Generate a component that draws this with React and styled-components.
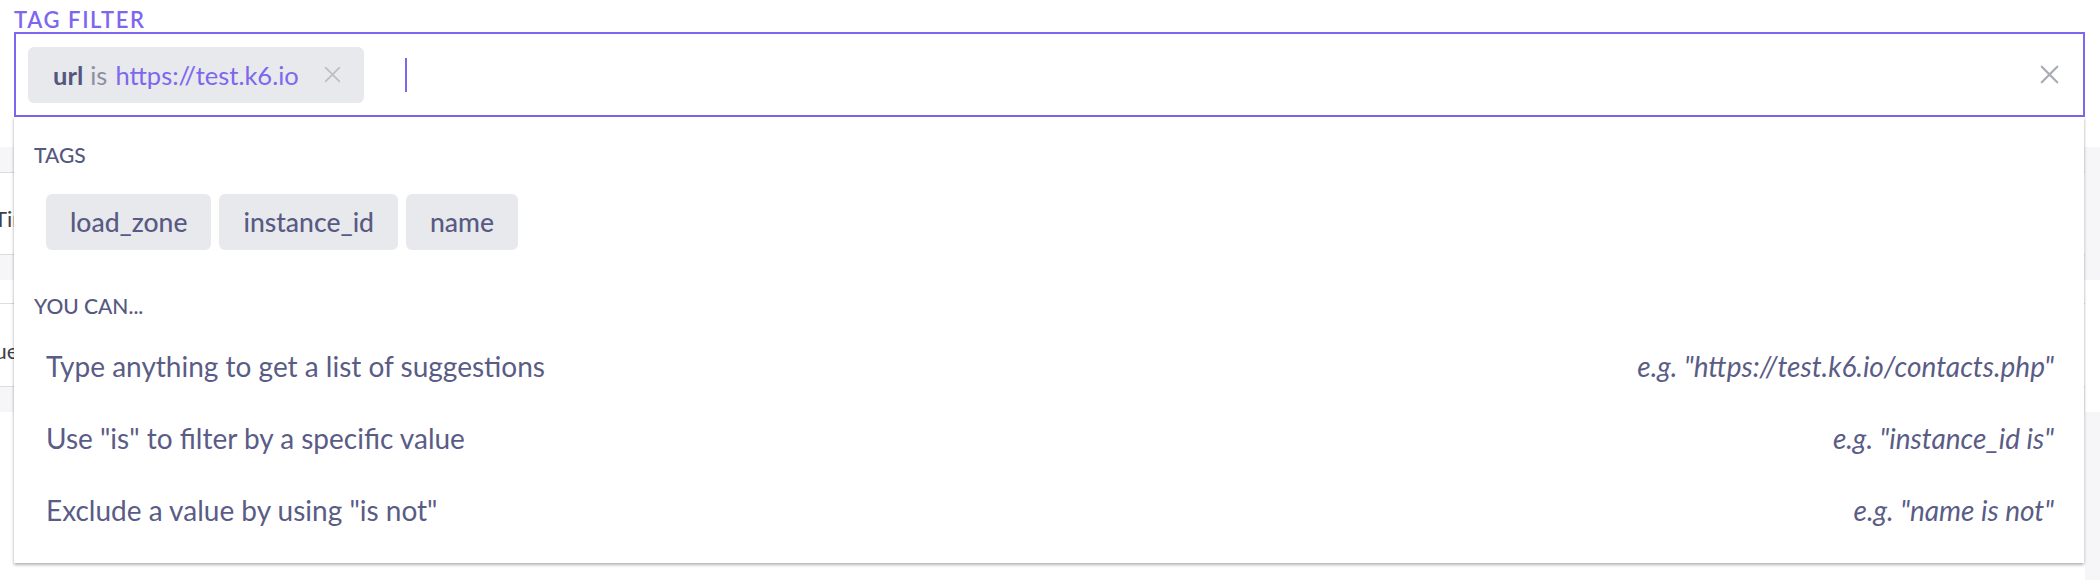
import styled, { createGlobalStyle } from 'styled-components';

const GlobalStyle = createGlobalStyle`
  html,
  body {
    margin: 0;
    padding: 0;
    background: #fff;
    overflow: hidden;
  }
  body {
    font-family: Lato, 'Open Sans', sans-serif;
  }
`;

const tags = ['load_zone', 'instance_id', 'name'];

const tips = [
  {
    text: 'Type anything to get a list of suggestions',
    example: 'e.g. "https://test.k6.io/contacts.php"',
  },
  { text: 'Use "is" to filter by a specific value', example: 'e.g. "instance_id is"' },
  { text: 'Exclude a value by using "is not"', example: 'e.g. "name is not"' },
];

function CloseIcon({ size, color, stroke }) {
  return (
    <svg width={size} height={size} viewBox="0 0 16 16" fill="none">
      <path
        d="M1.5 1.5L14.5 14.5M14.5 1.5L1.5 14.5"
        stroke={color}
        strokeWidth={stroke}
        strokeLinecap="round"
      />
    </svg>
  );
}

function TagFilter() {
  return (
    <FilterWrap>
      <FieldLabel>Tag filter</FieldLabel>
      <InputBox>
        <Chip>
          <ChipKey>url</ChipKey>
          <ChipOp>is</ChipOp>
          <ChipValue>https://test.k6.io</ChipValue>
          <ChipClose>
            <CloseIcon size={17} color="#bcbdc2" stroke={1.5} />
          </ChipClose>
        </Chip>
        <Caret />
        <ClearButton>
          <CloseIcon size={19} color="#a9acb7" stroke={1.9} />
        </ClearButton>
      </InputBox>

      <Dropdown>
        <SectionLabel>Tags</SectionLabel>
        <TagList>
          {tags.map((t) => (
            <TagPill key={t}>{t}</TagPill>
          ))}
        </TagList>

        <SectionLabel $spaced>You can...</SectionLabel>
        <TipList>
          {tips.map((tip) => (
            <TipRow key={tip.text}>
              <span>{tip.text}</span>
              <Example>{tip.example}</Example>
            </TipRow>
          ))}
        </TipList>
      </Dropdown>
    </FilterWrap>
  );
}

function Backdrop() {
  return (
    <BackdropGrid>
      <Table>
        <Band $h={30} />
        <Band $h={26} $tone="gray" $line />
        <TableRow $h={82} $shift={-6}>
          Timings
        </TableRow>
        <Band $h={25} $tone="gray" />
        <Band $h={24} $line />
        <TableRow $h={83} $shift={-35}>
          Values
        </TableRow>
        <Band $h={25} $tone="gray" />
      </Table>
      <Aside>
        <Band $h={30} />
        <Band $h={133} $tone="gray" />
        <Band $h={132} />
        <Band $h={200} $tone="gray" />
      </Aside>
    </BackdropGrid>
  );
}

export default function App() {
  return (
    <Page>
      <GlobalStyle />
      <TagFilter />
      <Backdrop />
    </Page>
  );
}

const Page = styled.div`
  position: relative;
  width: 2100px;
  height: 580px;
  overflow: hidden;
`;

const FilterWrap = styled.div`
  position: relative;
  z-index: 2;
  margin: 0 15px 0 14px;
`;

const FieldLabel = styled.div`
  padding-top: 7px;
  font-size: 22px;
  line-height: 25px;
  font-weight: 600;
  letter-spacing: 1.6px;
  text-transform: uppercase;
  color: #7c67ee;
`;

const InputBox = styled.div`
  display: flex;
  align-items: center;
  box-sizing: border-box;
  height: 85px;
  padding: 0 24px 0 12px;
  border: 2px solid #7d66f2;
  background: #fff;
`;

const Chip = styled.div`
  display: flex;
  align-items: center;
  height: 56px;
  padding: 0 23px 0 25px;
  border-radius: 6px;
  background: #e8e9ec;
  font-size: 25.5px;
  white-space: nowrap;
`;

const ChipKey = styled.span`
  font-weight: 700;
  color: #54567d;
`;

const ChipOp = styled.span`
  margin: 0 8px 0 7px;
  color: #8d8e9e;
`;

const ChipValue = styled.span`
  color: #7c67ee;
`;

const ChipClose = styled.span`
  display: flex;
  margin-left: 25px;
`;

const Caret = styled.span`
  width: 2px;
  height: 34px;
  margin-left: 41px;
  background: #7c67ee;
`;

const ClearButton = styled.span`
  display: flex;
  margin-left: auto;
`;

const Dropdown = styled.div`
  position: absolute;
  top: 100%;
  left: 0;
  right: 1px;
  padding: 25px 20px 17px;
  background: #fff;
  box-shadow: 0 2px 3px rgba(0, 0, 0, 0.28), 0 0 3px rgba(0, 0, 0, 0.08);
`;

const SectionLabel = styled.div`
  margin-top: ${(p) => (p.$spaced ? '43px' : '0')};
  font-size: 21px;
  line-height: 25px;
  font-weight: 500;
  text-transform: uppercase;
  color: #55587f;
`;

const TagList = styled.div`
  display: flex;
  gap: 8px;
  margin-top: 27px;
  padding-left: 12px;
`;

const TagPill = styled.div`
  display: flex;
  align-items: center;
  height: 56px;
  padding: 0 24px;
  border-radius: 6px;
  background: #e8e9ec;
  font-size: 26.5px;
  font-weight: 500;
  color: #585a84;
`;

const TipList = styled.div`
  margin-top: 12px;
`;

const TipRow = styled.div`
  display: flex;
  align-items: center;
  justify-content: space-between;
  height: 72px;
  padding: 0 10px 0 12px;
  font-size: 28px;
  color: #5a5c86;
`;

const Example = styled.span`
  font-style: italic;
`;

const BackdropGrid = styled.div`
  display: grid;
  grid-template-columns: 1fr 15px;
`;

const Table = styled.div`
  display: flex;
  flex-direction: column;
`;

const Aside = styled.div`
  display: flex;
  flex-direction: column;
`;

const Band = styled.div`
  box-sizing: border-box;
  height: ${(p) => p.$h}px;
  background: ${(p) => (p.$tone === 'gray' ? '#f6f6f8' : '#fff')};
  border-bottom: ${(p) => (p.$line ? '1px solid #dcdce1' : 'none')};
`;

const TableRow = styled.div`
  box-sizing: border-box;
  display: flex;
  align-items: center;
  height: ${(p) => p.$h}px;
  padding-top: 10px;
  margin-left: ${(p) => p.$shift}px;
  border-bottom: 1px solid #dcdce1;
  font-size: 22px;
  color: #3f4048;
`;
